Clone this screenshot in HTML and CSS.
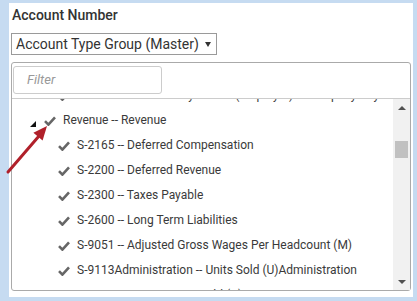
FILE: index.html
```html
<!DOCTYPE html>
<html lang="en">
<head>
  <meta charset="UTF-8" />
  <title>Account Number</title>
  <link rel="stylesheet" href="styles.css">
</head>
<body>
  <div class="panel">
    <div class="field-label">Account Number</div>
    <div class="group-select">
      <span class="group-text">Account Type Group (Master)</span>
      <span class="caret"></span>
    </div>

    <div class="tree-box">
      <div class="filter-bar">
        <div class="filter-input">Filter</div>
      </div>
      <div class="tree-body">
        <div class="tree-view">
          <ul class="tree-list">
            <li class="node child">
              <span class="expander"></span>
              <span class="check"><svg width="12" height="10" viewBox="0 0 12 10"><path d="M1 5.2 L4.4 8.6 L11 1.4" /></svg></span>
              <span class="title">S-1950 -- Accrued Payroll Tax (Employer) -- Company Payable (y)</span>
            </li>
            <li class="node group">
              <span class="expander"><span class="tri"></span></span>
              <span class="check"><svg width="12" height="10" viewBox="0 0 12 10"><path d="M1 5.2 L4.4 8.6 L11 1.4" /></svg></span>
              <span class="title">Revenue -- Revenue</span>
            </li>
            <li class="node child">
              <span class="expander"></span>
              <span class="check"><svg width="12" height="10" viewBox="0 0 12 10"><path d="M1 5.2 L4.4 8.6 L11 1.4" /></svg></span>
              <span class="title">S-2165 -- Deferred Compensation</span>
            </li>
            <li class="node child">
              <span class="expander"></span>
              <span class="check"><svg width="12" height="10" viewBox="0 0 12 10"><path d="M1 5.2 L4.4 8.6 L11 1.4" /></svg></span>
              <span class="title">S-2200 -- Deferred Revenue</span>
            </li>
            <li class="node child">
              <span class="expander"></span>
              <span class="check"><svg width="12" height="10" viewBox="0 0 12 10"><path d="M1 5.2 L4.4 8.6 L11 1.4" /></svg></span>
              <span class="title">S-2300 -- Taxes Payable</span>
            </li>
            <li class="node child">
              <span class="expander"></span>
              <span class="check"><svg width="12" height="10" viewBox="0 0 12 10"><path d="M1 5.2 L4.4 8.6 L11 1.4" /></svg></span>
              <span class="title">S-2600 -- Long Term Liabilities</span>
            </li>
            <li class="node child">
              <span class="expander"></span>
              <span class="check"><svg width="12" height="10" viewBox="0 0 12 10"><path d="M1 5.2 L4.4 8.6 L11 1.4" /></svg></span>
              <span class="title">S-9051 -- Adjusted Gross Wages Per Headcount (M)</span>
            </li>
            <li class="node child">
              <span class="expander"></span>
              <span class="check"><svg width="12" height="10" viewBox="0 0 12 10"><path d="M1 5.2 L4.4 8.6 L11 1.4" /></svg></span>
              <span class="title">S-9113Administration -- Units Sold (U)Administration</span>
            </li>
            <li class="node child">
              <span class="expander"></span>
              <span class="check"><svg width="12" height="10" viewBox="0 0 12 10"><path d="M1 5.2 L4.4 8.6 L11 1.4" /></svg></span>
              <span class="title">S-9114Finance -- Units Sold (U)Finance</span>
            </li>
          </ul>
        </div>
        <div class="scrollbar">
          <div class="scroll-btn"><span class="arrow-up"></span></div>
          <div class="scroll-track"><div class="scroll-thumb"></div></div>
          <div class="scroll-btn"><span class="arrow-down"></span></div>
        </div>
      </div>
    </div>
  </div>

  <!-- annotation arrow pointing at the expander -->
  <svg class="callout" width="60" height="180" viewBox="0 0 60 180">
    <line x1="8" y1="172" x2="39" y2="136" stroke="#b0202a" stroke-width="3" stroke-linecap="round" />
    <polygon points="47,126 42.6,140.6 33.4,132.8" fill="#b0202a" />
  </svg>
</body>
</html>
```

FILE: styles.css
```css
body {
  margin: 0;
  background-color: #c6dbf1;
  font-family: Roboto, "Liberation Sans", Arial, sans-serif;
  color: #333;
  position: relative;
  height: 301px;
  overflow: hidden;
}

.panel {
  margin: 3px 4px 0 9px;
  width: 404px;
  height: 294px;
  background-color: #ffffff;
  padding: 4px 0 0 2px;
  box-sizing: border-box;
}

.field-label {
  font-size: 14px;
  font-weight: 500;
  line-height: 17px;
  padding-left: 1px;
  color: #333;
}

.group-select {
  margin-top: 9px;
  width: 206px;
  height: 22px;
  box-sizing: border-box;
  border: 1px solid #9a9a9a;
  display: flex;
  align-items: center;
  padding: 0 5px 0 4px;
  font-size: 14px;
  color: #333;
}

.group-text {
  flex: 1;
  white-space: nowrap;
}

.caret {
  width: 0;
  height: 0;
  border-left: 3.5px solid transparent;
  border-right: 3.5px solid transparent;
  border-top: 5px solid #333;
}

.tree-box {
  margin-top: 7px;
  width: 400px;
  height: 229px;
  box-sizing: border-box;
  border: 1px solid #aaaaaa;
  border-radius: 3px;
  display: flex;
  flex-direction: column;
}

.filter-bar {
  padding: 3px 0 4px 1px;
  border-bottom: 1px solid #cccccc;
}

.filter-input {
  width: 149px;
  height: 28px;
  box-sizing: border-box;
  border: 1px solid #cccccc;
  border-radius: 3px;
  padding-left: 13px;
  font-size: 13px;
  font-style: italic;
  line-height: 26px;
  color: #999;
}

.tree-body {
  flex: 1;
  display: flex;
  overflow: hidden;
}

.tree-view {
  flex: 1;
  overflow: hidden;
}

.tree-list {
  list-style: none;
  margin: -16px 0 0 0;
  padding: 0;
}

.node {
  display: flex;
  align-items: center;
  height: 25px;
  font-size: 12px;
  line-height: 25px;
  color: #3a3a3a;
  white-space: nowrap;
}

.node.group { padding-left: 16px; }
.node.child { padding-left: 30px; }

.expander {
  width: 16px;
  height: 25px;
  position: relative;
  flex: none;
}

.tri {
  position: absolute;
  left: 2px;
  top: 13px;
  width: 0;
  height: 0;
  border-left: 6px solid transparent;
  border-bottom: 6px solid #111;
}

.check {
  width: 16px;
  flex: none;
  display: flex;
  align-items: center;
}

.check path {
  fill: none;
  stroke: #666;
  stroke-width: 2.6;
}

.title {
  margin-left: 3px;
}

.scrollbar {
  width: 17px;
  flex: none;
  background-color: #f1f1f1;
  display: flex;
  flex-direction: column;
}

.scroll-btn {
  height: 17px;
  display: flex;
  align-items: center;
  justify-content: center;
}

.arrow-up {
  width: 0;
  height: 0;
  border-left: 4px solid transparent;
  border-right: 4px solid transparent;
  border-bottom: 4px solid #505050;
}

.arrow-down {
  width: 0;
  height: 0;
  border-left: 4px solid transparent;
  border-right: 4px solid transparent;
  border-top: 4px solid #505050;
}

.scroll-track {
  flex: 1;
  padding: 25px 2px 0;
}

.scroll-thumb {
  height: 17px;
  background-color: #c1c1c1;
}

.callout {
  position: absolute;
  left: 0;
  top: 0;
}
```
